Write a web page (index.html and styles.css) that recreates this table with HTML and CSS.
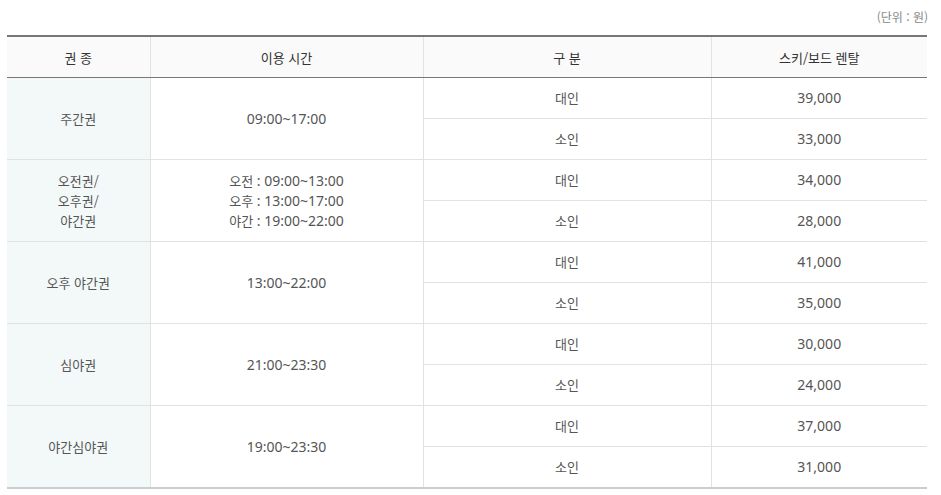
FILE: index.html
```html
<!DOCTYPE html>
<html lang="ko">
<head>
<meta charset="utf-8">
<link rel="stylesheet" href="styles.css">
</head>
<body>
<div class="wrap">
  <p class="unit">(단위 : 원)</p>
  <table class="price">
    <colgroup>
      <col class="c1"><col class="c2"><col class="c3"><col class="c4">
    </colgroup>
    <thead>
      <tr><th>권 종</th><th>이용 시간</th><th>구 분</th><th>스키/보드 렌탈</th></tr>
    </thead>
    <tbody>
      <tr><td rowspan="2" class="kind">주간권</td><td rowspan="2"><span class="num">09:00~17:00</span></td><td>대인</td><td><span class="num">39,000</span></td></tr>
      <tr><td>소인</td><td><span class="num">33,000</span></td></tr>
      <tr><td rowspan="2" class="kind">오전권/<br>오후권/<br>야간권</td><td rowspan="2">오전 <span class="num">: 09:00~13:00</span><br>오후 <span class="num">: 13:00~17:00</span><br>야간 <span class="num">: 19:00~22:00</span></td><td>대인</td><td><span class="num">34,000</span></td></tr>
      <tr><td>소인</td><td><span class="num">28,000</span></td></tr>
      <tr><td rowspan="2" class="kind">오후 야간권</td><td rowspan="2"><span class="num">13:00~22:00</span></td><td>대인</td><td><span class="num">41,000</span></td></tr>
      <tr><td>소인</td><td><span class="num">35,000</span></td></tr>
      <tr><td rowspan="2" class="kind">심야권</td><td rowspan="2"><span class="num">21:00~23:30</span></td><td>대인</td><td><span class="num">30,000</span></td></tr>
      <tr><td>소인</td><td><span class="num">24,000</span></td></tr>
      <tr><td rowspan="2" class="kind">야간심야권</td><td rowspan="2"><span class="num">19:00~23:30</span></td><td>대인</td><td><span class="num">37,000</span></td></tr>
      <tr><td>소인</td><td><span class="num">31,000</span></td></tr>
    </tbody>
  </table>
</div>
</body>
</html>
```
FILE: styles.css
```css
html, body {
  margin: 0;
  padding: 0;
  background: #fff;
}
.wrap {
  padding: 0 14px 0 7px;
  font-family: "Noto Sans CJK KR", "Noto Sans", sans-serif;
  color: #555;
}
.unit {
  margin: 0;
  height: 35px;
  padding-top: 8px;
  box-sizing: border-box;
  text-align: right;
  font-size: 12px;
  line-height: 18px;
  color: #888;
  margin-right: -1px;
}
.price {
  width: 920px;
  border-collapse: collapse;
  table-layout: fixed;
  border-top: 2px solid #777;
  border-bottom: 2px solid #ccc;
  font-size: 13px;
}
.c1 { width: 143px; }
.c2 { width: 273px; }
.c3 { width: 288px; }
.c4 { width: 216px; }
.price th {
  height: 40px;
  padding: 0;
  background: #fafafa;
  font-weight: normal;
  color: #333;
  border-left: 1px solid #e2e2e2;
  border-bottom: 1px solid #777;
}
.price td {
  height: 40px;
  padding: 0;
  text-align: center;
  line-height: 20px;
  border-left: 1px solid #e2e2e2;
  border-top: 1px solid #e2e2e2;
}
.num {
  font-family: "Noto Sans", "Noto Sans CJK KR", sans-serif;
  font-size: 14px;
}
.price th:first-child,
.price td.kind {
  border-left: none;
}
.price tbody tr:first-child td {
  border-top: none;
}
.price td.kind {
  background: #f2f9f8;
}
```
